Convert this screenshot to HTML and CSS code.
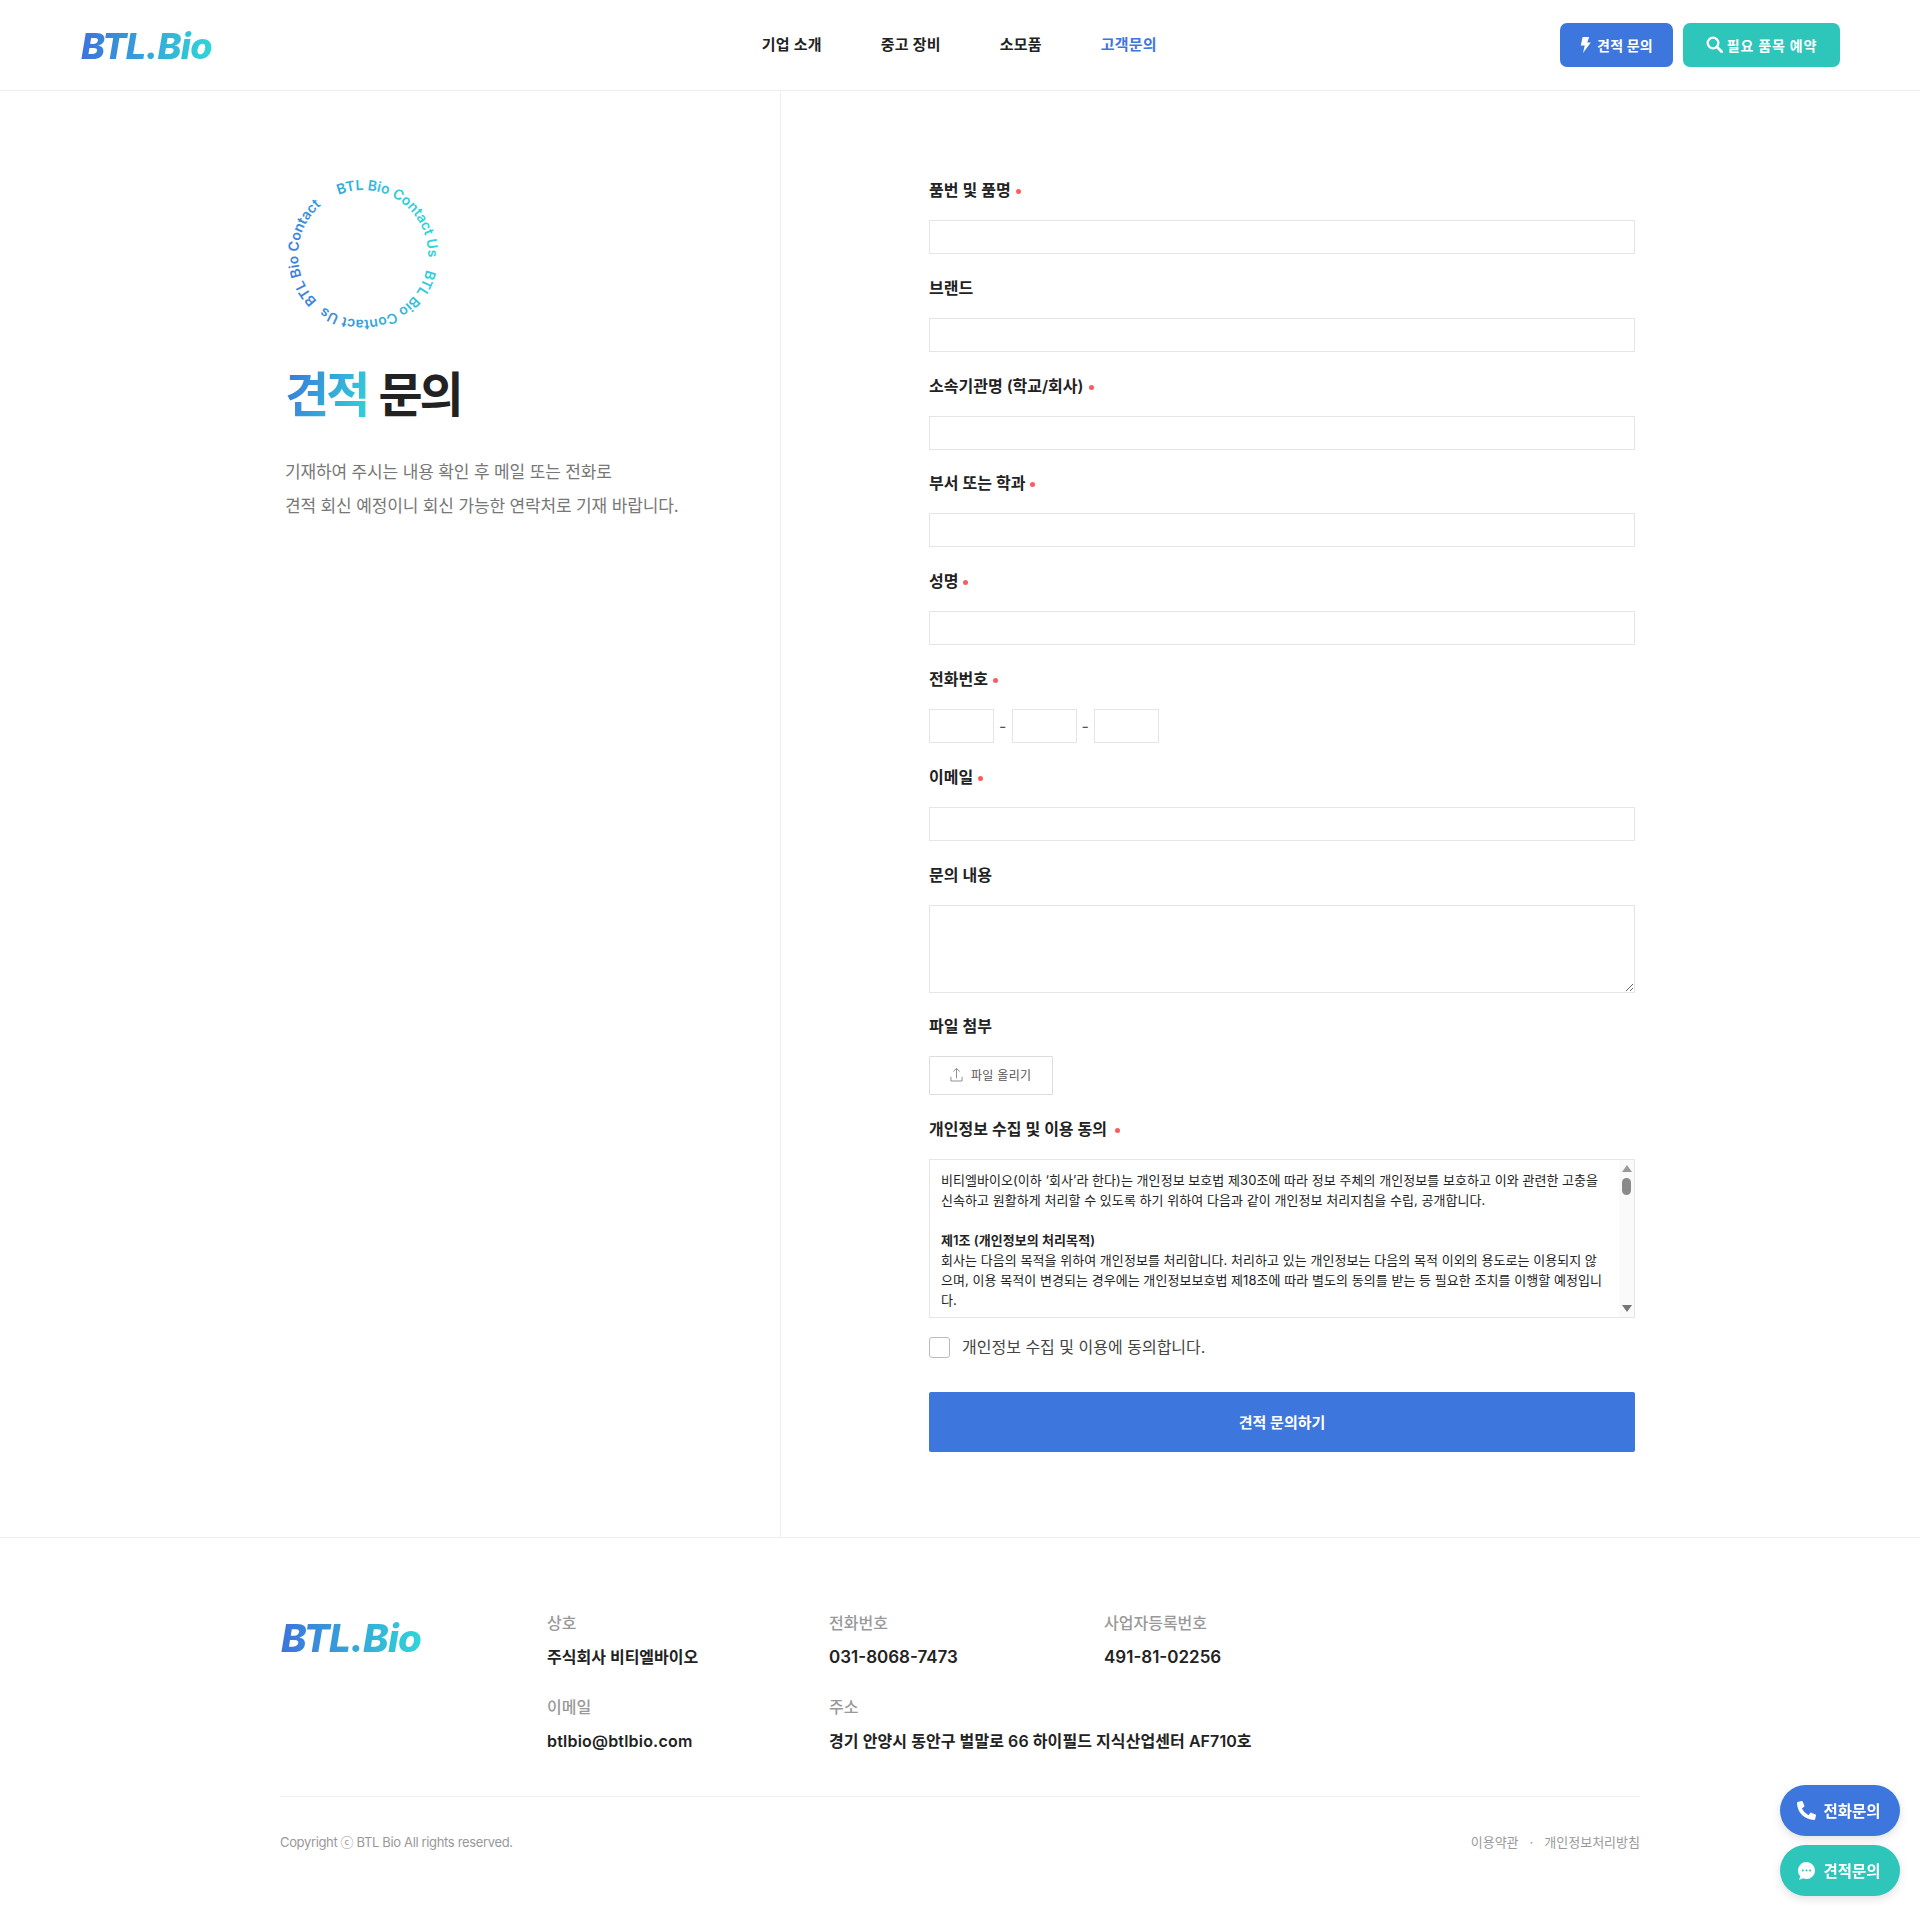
FILE: index.html
```html
<!DOCTYPE html>
<html lang="ko">
<head>
    <meta charset="UTF-8">
    <meta name="viewport" content="width=device-width, initial-scale=1.0">
    <title>BTL.Bio - 견적 문의</title>
    <link rel="stylesheet" href="styles.css">
</head>
<body>
    <header class="header">
        <a class="logo" href="#">BTL.Bio</a>
        <nav class="nav">
            <a href="#">기업 소개</a>
            <a href="#">중고 장비</a>
            <a href="#">소모품</a>
            <a href="#" class="active">고객문의</a>
        </nav>
        <div class="header-buttons">
            <a class="btn btn-blue" href="#">
                <svg class="btn-icon-bolt" viewBox="0 0 11 16"><path d="M2.6 0h6.6L7.2 5.4h3.6L3 16l1.7-7.4H.8z" fill="#fff"/></svg>
                견적 문의
            </a>
            <a class="btn btn-teal" href="#">
                <svg class="btn-icon-search" viewBox="0 0 16 16"><circle cx="6.6" cy="6.6" r="5" fill="none" stroke="#fff" stroke-width="2.2"/><path d="M10.4 10.4l4.4 4.4" stroke="#fff" stroke-width="2.6" stroke-linecap="round"/></svg>
                필요 품목 예약
            </a>
        </div>
    </header>

    <main class="main">
        <section class="intro">
            <svg class="ring" viewBox="0 0 160 160">
                <defs>
                    <linearGradient id="ringGrad" gradientUnits="userSpaceOnUse" x1="5" y1="110" x2="150" y2="70">
                        <stop offset="0" stop-color="#3c7bdd"/>
                        <stop offset="1" stop-color="#2fd3d8"/>
                    </linearGradient>
                    <path id="ringPath" d="M55.65 19.73A65 65 0 0 1 104.35 140.27A65 65 0 0 1 55.65 19.73"/>
                </defs>
                <text class="ring-text" fill="url(#ringGrad)">
                    <textPath href="#ringPath" startOffset="0%">BTL Bio Contact Us</textPath>
                    <textPath href="#ringPath" startOffset="34.7%">BTL Bio Contact Us</textPath>
                    <textPath href="#ringPath" startOffset="68.6%">BTL Bio Contact</textPath>
                </text>
            </svg>
            <h1 class="title"><span class="title-grad">견적</span> 문의</h1>
            <p class="intro-text">
                기재하여 주시는 내용 확인 후 메일 또는 전화로<br>
                견적 회신 예정이니 회신 가능한 연락처로 기재 바랍니다.
            </p>
        </section>

        <form class="form">
            <div class="field">
                <label class="label">품번 및 품명<i class="req"></i></label>
                <input class="input" type="text">
            </div>
            <div class="field">
                <label class="label">브랜드</label>
                <input class="input" type="text">
            </div>
            <div class="field">
                <label class="label">소속기관명 (학교/회사)<i class="req"></i></label>
                <input class="input" type="text">
            </div>
            <div class="field">
                <label class="label">부서 또는 학과<i class="req"></i></label>
                <input class="input" type="text">
            </div>
            <div class="field">
                <label class="label">성명<i class="req"></i></label>
                <input class="input" type="text">
            </div>
            <div class="field">
                <label class="label">전화번호<i class="req"></i></label>
                <div class="phone">
                    <input class="input" type="text">
                    <span>-</span>
                    <input class="input" type="text">
                    <span>-</span>
                    <input class="input" type="text">
                </div>
            </div>
            <div class="field">
                <label class="label">이메일<i class="req"></i></label>
                <input class="input" type="text">
            </div>
            <div class="field">
                <label class="label">문의 내용</label>
                <textarea class="input textarea"></textarea>
            </div>
            <div class="field">
                <label class="label">파일 첨부</label>
                <button type="button" class="file-btn">
                    <svg viewBox="0 0 14 16"><path d="M7 12V1.5M3.6 4.8L7 1.5l3.4 3.3M1 10.5v4.5h12v-4.5" fill="none" stroke="#888" stroke-width="1"/></svg>
                    파일 올리기
                </button>
            </div>
            <div class="field">
                <label class="label">개인정보 수집 및 이용 동의 <i class="req req-wide"></i></label>
                <div class="policy">
                    <div class="policy-text">
                        비티엘바이오(이하 ‘회사’라 한다)는 개인정보 보호법 제30조에 따라 정보 주체의 개인정보를 보호하고 이와 관련한 고충을 신속하고 원활하게 처리할 수 있도록 하기 위하여 다음과 같이 개인정보 처리지침을 수립, 공개합니다.<br><br>
                        <b>제1조 (개인정보의 처리목적)</b><br>
                        회사는 다음의 목적을 위하여 개인정보를 처리합니다. 처리하고 있는 개인정보는 다음의 목적 이외의 용도로는 이용되지 않으며, 이용 목적이 변경되는 경우에는 개인정보보호법 제18조에 따라 별도의 동의를 받는 등 필요한 조치를 이행할 예정입니다.
                    </div>
                    <div class="scrollbar">
                        <span class="arrow-up"></span>
                        <span class="thumb"></span>
                        <span class="arrow-down"></span>
                    </div>
                </div>
                <label class="agree"><input type="checkbox"><span>개인정보 수집 및 이용에 동의합니다.</span></label>
            </div>
            <button type="button" class="submit">견적 문의하기</button>
        </form>
    </main>

    <footer class="footer">
        <div class="footer-inner">
            <div class="footer-top">
                <a class="logo footer-logo" href="#">BTL.Bio</a>
                <dl class="info">
                    <div><dt>상호</dt><dd>주식회사 비티엘바이오</dd></div>
                    <div><dt>전화번호</dt><dd class="num">031-8068-7473</dd></div>
                    <div><dt>사업자등록번호</dt><dd class="num">491-81-02256</dd></div>
                    <div><dt>이메일</dt><dd class="mail">btlbio@btlbio.com</dd></div>
                    <div class="info-wide"><dt>주소</dt><dd class="addr">경기 안양시 동안구 벌말로 66 하이필드 지식산업센터 AF710호</dd></div>
                </dl>
            </div>
            <div class="footer-bottom">
                <span class="copyright">Copyright ⓒ BTL Bio All rights reserved.</span>
                <div class="footer-links">
                    <a href="#">이용약관</a>
                    <span>·</span>
                    <a href="#">개인정보처리방침</a>
                </div>
            </div>
        </div>
    </footer>

    <div class="floating">
        <a class="float-btn float-blue" href="#">
            <svg viewBox="0 0 512 512"><path fill="#fff" d="M497.39 361.8l-112-48a24 24 0 0 0-28 6.9l-49.6 60.6A370.66 370.66 0 0 1 130.6 204.11l60.6-49.6a23.94 23.94 0 0 0 6.9-28l-48-112A24.16 24.16 0 0 0 122.6.61l-104 24A24 24 0 0 0 0 48c0 256.5 207.9 464 464 464a24 24 0 0 0 23.4-18.6l24-104a24.29 24.29 0 0 0-14.01-27.6z"/></svg>
            전화문의
        </a>
        <a class="float-btn float-teal" href="#">
            <svg viewBox="0 0 20 20"><path fill="#fff" d="M10 1a9 9 0 0 1 0 18c-1.300 0-2.500-.3-3.600-.8-1.300.7-2.800 1.300-4.400 1.300.8-1.100 1.300-2.200 1.400-3.500A9 9 0 0 1 10 1z"/><circle cx="6.200" cy="10" r="1.100" fill="#2ec5bb"/><circle cx="10" cy="10" r="1.100" fill="#2ec5bb"/><circle cx="13.800" cy="10" r="1.100" fill="#2ec5bb"/></svg>
            견적문의
        </a>
    </div>
</body>
</html>
```

FILE: styles.css
```css
* {
    margin: 0;
    padding: 0;
    box-sizing: border-box;
}

body {
    font-family: Inter, "Noto Sans CJK KR", sans-serif;
    color: #222;
    background: #fff;
}

a {
    color: inherit;
    text-decoration: none;
}

.header {
    height: 91px;
    border-bottom: 1px solid #eee;
    display: flex;
    align-items: center;
    padding: 0 80px 0 81px;
}

.logo {
    font-size: 36px;
    font-weight: 800;
    font-style: italic;
    letter-spacing: -0.7px;
    line-height: 1;
    background: linear-gradient(90deg, #3c74dc 0%, #2fd5d8 100%);
    background-clip: text;
    -webkit-background-clip: text;
    -webkit-text-fill-color: transparent;
}

.header > .logo {
    margin-top: 2px;
}

.nav {
    display: flex;
    gap: 59px;
    margin-left: 550px;
    font-size: 15px;
    font-weight: 600;
    letter-spacing: 0.2px;
    margin-top: -3px;
}

.nav .active {
    color: #3d76dd;
}

.header-buttons {
    display: flex;
    gap: 10px;
    margin-left: auto;
}

.btn {
    height: 44px;
    padding-bottom: 1px;
    border-radius: 7px;
    display: flex;
    align-items: center;
    justify-content: center;
    gap: 6px;
    color: #fff;
    font-size: 14px;
    font-weight: 700;
    letter-spacing: 0.2px;
}

.btn-blue {
    width: 113px;
    background: #3d76dd;
}

.btn-teal {
    width: 157px;
    gap: 4px;
    background: #2ec5bb;
    letter-spacing: 0.8px;
}

.btn-icon-bolt {
    width: 11px;
    height: 16px;
}

.btn-icon-search {
    width: 17px;
    height: 17px;
}

.main {
    display: flex;
}

.intro {
    width: 781px;
    border-right: 1px solid #eee;
    padding: 84px 0 0 285px;
}

.ring {
    display: block;
    width: 160px;
    height: 160px;
    margin-left: -2px;
}

.ring-text {
    font-family: Inter, sans-serif;
    font-size: 14px;
    font-weight: 600;
}

.title {
    font-size: 48px;
    font-weight: 600;
    letter-spacing: -3px;
    word-spacing: 2px;
    line-height: 60px;
    margin-top: 30px;
}

.title-grad {
    background: linear-gradient(110deg, #3c74dc 0%, #2fd5d8 100%);
    background-clip: text;
    -webkit-background-clip: text;
    -webkit-text-fill-color: transparent;
}

.intro-text {
    font-size: 17px;
    letter-spacing: -0.15px;
    line-height: 34px;
    color: #777;
    margin-top: 30px;
}

.form {
    width: 706px;
    margin-left: 148px;
    padding: 87px 0 85px;
}

.field {
    margin-bottom: 21.8px;
}

.label {
    display: block;
    font-size: 16px;
    font-weight: 600;
    line-height: 24px;
    margin-bottom: 18px;
}

.req {
    display: inline-block;
    width: 5px;
    height: 5px;
    border-radius: 50%;
    background: #ff5a5f;
    margin-left: 5px;
    vertical-align: 2px;
}

.req-wide {
    margin-left: 4px;
}

.input {
    display: block;
    width: 100%;
    height: 34px;
    border: 1px solid #e5e5e5;
    background: #fff;
    font-family: inherit;
}

.phone {
    display: flex;
    align-items: center;
    gap: 5px;
    font-size: 16px;
    color: #555;
}

.phone span {
    width: 7.5px;
    text-align: center;
}

.phone .input {
    width: 65px;
}

.textarea {
    height: 88px;
    resize: vertical;
}

.file-btn {
    display: flex;
    align-items: center;
    gap: 8px;
    width: 124px;
    height: 39px;
    padding: 0 0 2px 20px;
    border: 1px solid #ddd;
    border-radius: 1px;
    background: #fff;
    font-family: inherit;
    font-size: 12px;
    letter-spacing: 0.3px;
    color: #555;
}

.file-btn svg {
    width: 13px;
    height: 15px;
}

.policy {
    height: 159px;
    border: 1px solid #e5e5e5;
    position: relative;
    overflow: hidden;
    padding: 10px 27px 0 11px;
    font-size: 13px;
    letter-spacing: 0.045px;
    line-height: 20px;
    color: #222;
}

.policy-text {
    word-break: break-all;
}

.policy-text b {
    font-weight: 600;
}

.scrollbar {
    position: absolute;
    top: 0;
    right: 0;
    bottom: 0;
    width: 15px;
    background: #fafafa;
}

.arrow-up,
.arrow-down {
    position: absolute;
    left: 2.5px;
    width: 0;
    height: 0;
    border-left: 5px solid transparent;
    border-right: 5px solid transparent;
}

.arrow-up {
    top: 5px;
    border-bottom: 7px solid #9a9a9a;
}

.arrow-down {
    bottom: 5px;
    border-top: 7px solid #777;
}

.thumb {
    position: absolute;
    top: 18px;
    left: 3px;
    width: 9px;
    height: 17px;
    border-radius: 5px;
    background: #8a8a8a;
}

.agree {
    display: flex;
    align-items: center;
    gap: 12px;
    margin-top: 19px;
    font-size: 16px;
    line-height: 21px;
    color: #444;
}

.agree input {
    appearance: none;
    -webkit-appearance: none;
    width: 21px;
    height: 21px;
    border: 1px solid #bbb;
    border-radius: 3px;
    background: #fff;
}

.submit {
    display: block;
    width: 100%;
    height: 60px;
    margin-top: 34px;
    padding-bottom: 2px;
    border: 0;
    border-radius: 2px;
    background: #3d76dd;
    color: #fff;
    font-family: inherit;
    font-size: 15px;
    font-weight: 600;
}

.footer {
    border-top: 1px solid #eee;
    padding-bottom: 60px;
}

.footer-inner {
    width: 1360px;
    margin: 0 auto;
}

.footer-top {
    display: flex;
    padding: 73px 0 43px;
    border-bottom: 1px solid #eee;
}

.footer-logo {
    width: 140px;
    height: 38px;
    margin-left: 1px;
    margin-right: 126px;
    margin-top: 8px;
    font-size: 38.5px;
}

.info {
    display: grid;
    grid-template-columns: 282px 275px 1fr;
    row-gap: 26px;
    flex: 1;
}

.info-wide {
    grid-column: span 2;
}

.info dt {
    font-size: 16px;
    font-weight: 500;
    line-height: 24px;
    color: #999;
    margin-bottom: 10px;
}

.info dd {
    font-size: 16px;
    font-weight: 600;
    line-height: 24px;
}

.info .num {
    font-size: 17px;
}

.info .mail {
    letter-spacing: 0.2px;
}

.info .addr {
    letter-spacing: 0.07px;
}

.footer-bottom {
    display: flex;
    justify-content: space-between;
    align-items: center;
    margin-top: 35px;
    font-size: 13px;
    line-height: 20px;
    color: #999;
}

.copyright {
    letter-spacing: -0.35px;
}

.footer-links {
    display: flex;
    gap: 11px;
}

.floating {
    position: fixed;
    right: 20px;
    bottom: 20px;
    display: flex;
    flex-direction: column;
    gap: 9px;
}

.float-btn {
    width: 120px;
    height: 51px;
    padding: 0 2px 1px 0;
    border-radius: 26px;
    display: flex;
    align-items: center;
    justify-content: center;
    gap: 7px;
    color: #fff;
    font-size: 15.5px;
    font-weight: 700;
    box-shadow: 0 3px 10px rgba(0, 0, 0, 0.12);
}

.float-btn svg {
    width: 19px;
    height: 19px;
}

.float-blue {
    background: #3d76dd;
}

.float-teal {
    background: #2ec5bb;
}
```
